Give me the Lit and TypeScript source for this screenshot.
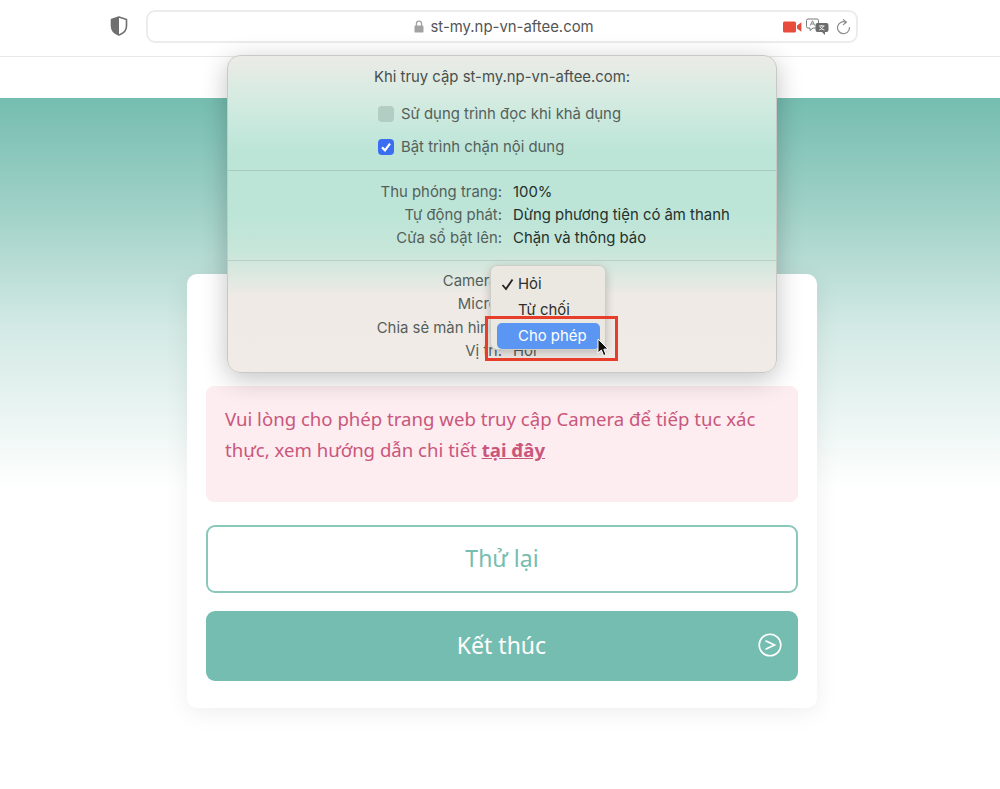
import { LitElement, html, css } from "lit";
import { customElement } from "lit/decorators.js";

@customElement("app-root")
export class AppRoot extends LitElement {
  static styles = css`
    :host { display: block; position: relative; width: 1000px; height: 789px; overflow: hidden; background: #fff; font-family: "Noto Sans", sans-serif; }
    .toolbar { height: 56px; border-bottom: 1px solid #e8e8e8; display: flex; align-items: flex-start; box-sizing: content-box; }
    .shield { margin: 16px 0 0 110px; width: 18px; height: 20px; flex: none; }
    .urlbar { margin: 10px 0 0 18px; width: 708px; height: 29px; border: 2px solid #ececec; border-radius: 9px; background: #fff; display: flex; align-items: center; position: relative; }
    .address { display: flex; align-items: center; gap: 7px; margin-left: 265.5px; font: 14.9px "Inter", sans-serif; color: #555; }
    .address svg { width: 10px; height: 13px; }
    .tools { margin-left: auto; margin-right: 5px; display: flex; align-items: center; gap: 4px; }
    .reload { margin-left: 3px; }
    .band { height: 41px; }
    .hero { height: 691px; background: linear-gradient(180deg, #75bdb0 0%, #9fd1c7 28%, #d2e9e4 58%, #ffffff 100%); background-size: 100% 392px; background-repeat: no-repeat; padding-top: 176px; box-sizing: border-box; }
    .card { width: 630px; height: 434px; margin-left: 187px; background: #fff; border-radius: 10px; box-shadow: 0 4px 24px rgba(0,0,0,.07); padding: 112px 19px 0; box-sizing: border-box; }
    .alert { height: 116px; background: #fdecf0; border-radius: 8px; padding: 17px 19px 0; box-sizing: border-box; color: #c9577b; font-size: 18.6px; line-height: 31px; }
    .alert b { font-weight: 700; text-decoration: underline; }
    .retry { margin-top: 23px; height: 68px; border: 2px solid #8ac8bc; border-radius: 9px; box-sizing: border-box; display: flex; align-items: center; justify-content: center; color: #75bdb0; font-size: 23px; background: #fff; padding-bottom: 2px; }
    .finish { margin-top: 18px; height: 70px; border-radius: 9px; background: #75bdb0; color: #fff; font-size: 23px; display: flex; align-items: center; justify-content: center; position: relative; padding: 0 1px 2px 0; box-sizing: border-box; }
    .finish svg { position: absolute; right: 16px; top: 22px; width: 24px; height: 24px; }

    .pop { position: absolute; left: 227px; top: 55px; width: 550px; height: 318px; box-sizing: border-box; border-radius: 13px; border: 1px solid #c8c8c4; box-shadow: 0 6px 26px rgba(0,0,0,.24); background: linear-gradient(180deg, #ecebe6 0%, #d4ebe1 14%, #bce5d8 30%, #bce5d8 50%, #c8e6da 62%, #efeae6 76%, #f0ebe7 100%); font: 14.9px "Inter", sans-serif; color: #555f5b; }
    .head { text-align: center; padding-top: 12px; line-height: 18px; color: #4a4f4d; }
    .checks { padding: 19px 0 0 150px; display: flex; flex-direction: column; gap: 15px; height: 65px; box-sizing: content-box; }
    .check { display: flex; align-items: center; gap: 7px; height: 18px; }
    .box { width: 16px; height: 16px; border-radius: 4px; flex: none; }
    .box.off { background: #b2cdc4; }
    .box.on { background: #3a6df0; display: flex; align-items: center; justify-content: center; }
    .box.on svg { width: 12px; height: 12px; }
    .sec { border-top: 1px solid #aacabd; }
    .sec.a { height: 90px; padding-top: 9.5px; box-sizing: border-box; }
    .sec.b { padding-top: 9px; height: 113px; box-sizing: border-box; border-top-color: #b8cfc5; }
    .row { display: grid; grid-template-columns: 274px 1fr; column-gap: 11px; height: 23.4px; line-height: 23.4px; }
    .row span:first-child { text-align: right; }
    .row span:last-child { color: #25302c; }
    .sec.b .row span:last-child { color: #555f5b; }

    .menu { position: absolute; left: 262px; top: 209px; width: 116px; height: 85px; box-sizing: border-box; background: #ebe7e1; border: 1px solid #cfcdc7; border-radius: 7px; box-shadow: 0 3px 10px rgba(0,0,0,.22); padding-top: 5px; color: #2e2e2e; }
    .item { height: 26px; line-height: 26px; padding-left: 27px; position: relative; }
    .item svg { position: absolute; left: 10px; top: 7px; width: 13px; height: 13px; }
    .item.sel { margin: 0 5px 0 6px; padding-left: 21px; background: #5b96f3; color: #fff; border-radius: 5px; }
    .mark { position: absolute; left: 485px; top: 316px; width: 133px; height: 45px; box-sizing: border-box; border: 3px solid #e63e2a; pointer-events: none; }
    .cursor { position: absolute; left: 597px; top: 338px; width: 12px; height: 19px; }
  `;

  render() {
    return html`
      <div class="toolbar">
        <svg class="shield" viewBox="0 0 18 20">
          <path d="M9 1 L16.5 3.4 V10 C16.5 14.6 13 17.6 9 19 C5 17.6 1.5 14.6 1.5 10 V3.4 Z" fill="#fff" stroke="#6f6f6f" stroke-width="1.6" stroke-linejoin="round"/>
          <path d="M9 1 L1.5 3.4 V10 C1.5 14.6 5 17.6 9 19 Z" fill="#6f6f6f"/>
        </svg>
        <div class="urlbar">
          <div class="address">
            <svg viewBox="0 0 10 13"><path d="M2.4 6 V3.8 a2.6 2.6 0 0 1 5.2 0 V6" fill="none" stroke="#a2a2a2" stroke-width="1.3"/><rect x="0.5" y="5.6" width="9" height="7" rx="1.2" fill="#a2a2a2"/></svg>
            <span>st-my.np-vn-aftee.com</span>
          </div>
          <div class="tools">
            <svg width="19" height="12" viewBox="0 0 19 12"><rect x="0" y="0.5" width="13" height="11" rx="1.6" fill="#e84c3d"/><path d="M14 4.4 L18.4 1.2 V10.8 L14 7.6 Z" fill="#e84c3d"/></svg>
            <svg width="23" height="18" viewBox="0 0 23 18">
              <path d="M2 1 H11 a1.5 1.5 0 0 1 1.5 1.5 V8.5 a1.5 1.5 0 0 1 -1.5 1.5 H7 L4 12.5 V10 H2 a1.5 1.5 0 0 1 -1.5 -1.5 V2.5 A1.5 1.5 0 0 1 2 1 Z" fill="#fff" stroke="#7a7a7a" stroke-width="1"/>
              <path d="M4.2 7.6 L6.5 2.8 L8.8 7.6 M5.1 6 H7.9" fill="none" stroke="#7a7a7a" stroke-width="0.9"/>
              <path d="M11.5 5 H20.5 a2 2 0 0 1 2 2 V12 a2 2 0 0 1 -2 2 H19 V17 L16 14 H11.5 a2 2 0 0 1 -2 -2 V7 a2 2 0 0 1 2 -2 Z" fill="#6c6c6c"/>
              <path d="M13 8 L18.5 8 M15.7 7 V8 M17.5 8 C16.8 10 15 11.5 13.2 12 M14 9 C15 10.6 16.5 11.6 18.5 12" fill="none" stroke="#fff" stroke-width="0.9"/>
            </svg>
            <svg class="reload" width="15" height="16" viewBox="0 0 15 16"><path d="M9.6 3.1 A6 6 0 1 0 13.5 8.6" fill="none" stroke="#8a8a8a" stroke-width="1.2" stroke-linecap="round"/><path d="M7.4 0.6 L10.4 3.2 L7.4 5.6" fill="none" stroke="#8a8a8a" stroke-width="1.2" stroke-linecap="round" stroke-linejoin="round"/></svg>
          </div>
        </div>
      </div>
      <div class="band"></div>
      <div class="hero">
        <div class="card">
          <div class="alert">Vui lòng cho phép trang web truy cập Camera để tiếp tục xác thực, xem hướng dẫn chi tiết <b>tại đây</b></div>
          <div class="retry">Thử lại</div>
          <div class="finish">Kết thúc
            <svg viewBox="0 0 24 24"><circle cx="12" cy="12" r="10.8" fill="none" stroke="#fff" stroke-width="1.6"/><path d="M7.5 7.8 L16.5 12 L7.5 16.2" fill="none" stroke="#fff" stroke-width="1.7"/></svg>
          </div>
        </div>
      </div>

      <div class="pop">
        <div class="head">Khi truy cập st-my.np-vn-aftee.com:</div>
        <div class="checks">
          <div class="check"><span class="box off"></span>Sử dụng trình đọc khi khả dụng</div>
          <div class="check"><span class="box on"><svg viewBox="0 0 12 12"><path d="M2 6.4 L5 9.4 L10 2.6" fill="none" stroke="#fff" stroke-width="2.2"/></svg></span>Bật trình chặn nội dung</div>
        </div>
        <div class="sec a">
          <div class="row"><span>Thu phóng trang:</span><span>100%</span></div>
          <div class="row"><span>Tự động phát:</span><span>Dừng phương tiện có âm thanh</span></div>
          <div class="row"><span>Cửa sổ bật lên:</span><span>Chặn và thông báo</span></div>
        </div>
        <div class="sec b">
          <div class="row"><span>Camera:</span><span>Hỏi</span></div>
          <div class="row"><span>Micro:</span><span>Hỏi</span></div>
          <div class="row"><span>Chia sẻ màn hình:</span><span>Hỏi</span></div>
          <div class="row"><span>Vị trí:</span><span>Hỏi</span></div>
        </div>
        <div class="menu">
          <div class="item"><svg viewBox="0 0 13 13"><path d="M1.5 7 L5 11 L11.5 1.5" fill="none" stroke="#222" stroke-width="1.8"/></svg>Hỏi</div>
          <div class="item">Từ chối</div>
          <div class="item sel">Cho phép</div>
        </div>
      </div>
      <div class="mark"></div>
      <svg class="cursor" viewBox="0 0 12 19"><path d="M1 1 V15 L4.4 12 L6.6 17.6 L9 16.6 L6.8 11.2 L11 11 Z" fill="#111" stroke="#fff" stroke-width="1"/></svg>
    `;
  }
}
